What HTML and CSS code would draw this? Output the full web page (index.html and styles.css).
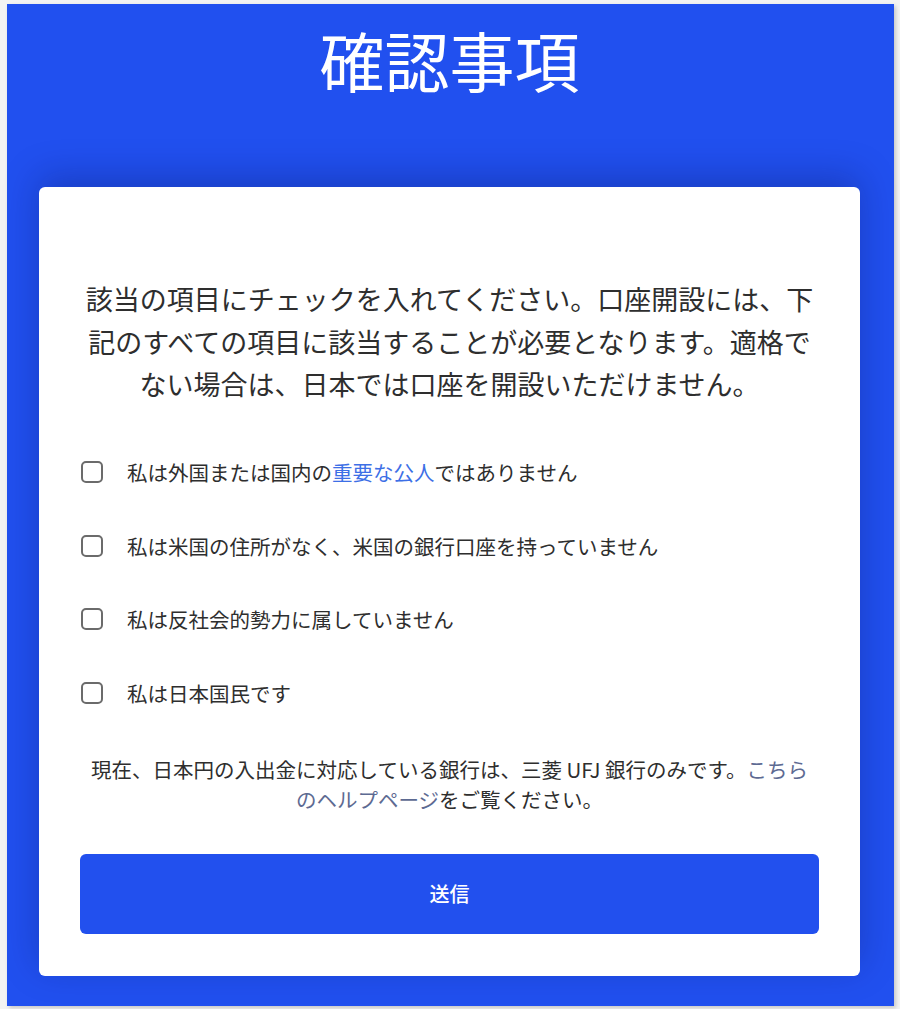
FILE: index.html
```html
<!DOCTYPE html>
<html lang="ja">
<head>
    <meta charset="UTF-8">
    <meta name="viewport" content="width=device-width, initial-scale=1.0">
    <title>確認事項</title>
    <link rel="stylesheet" href="styles.css">
</head>
<body>
    <div class="panel">
        <h1 class="title">確認事項</h1>
        <form class="card">
            <p class="intro">該当の項目にチェックを入れてください。口座開設には、下記のすべての項目に該当することが必要となります。適格でない場合は、日本では口座を開設いただけません。</p>
            <ul class="checks">
                <li class="check">
                    <span class="box"></span>
                    <span class="label">私は外国または国内の<a href="#" class="link">重要な公人</a>ではありません</span>
                </li>
                <li class="check">
                    <span class="box"></span>
                    <span class="label">私は米国の住所がなく、米国の銀行口座を持っていません</span>
                </li>
                <li class="check">
                    <span class="box"></span>
                    <span class="label">私は反社会的勢力に属していません</span>
                </li>
                <li class="check">
                    <span class="box"></span>
                    <span class="label">私は日本国民です</span>
                </li>
            </ul>
            <p class="note">現在、日本円の入出金に対応している銀行は、三菱 UFJ 銀行のみです。<a href="#" class="help">こちら<br>のヘルプページ</a>をご覧ください。</p>
            <button type="button" class="submit">送信</button>
        </form>
    </div>
</body>
</html>
```

FILE: styles.css
```css
body {
    margin: 0;
    background-color: #f3f3f3;
    font-family: "Noto Sans CJK JP", "Noto Sans", sans-serif;
}
.panel {
    margin: 4px 6px 3px 7px;
    height: 1002px;
    box-sizing: border-box;
    padding: 12px 34px 0 32px;
    background-color: #2150ef;
    box-shadow: 2px 2px 4px rgba(0, 0, 0, 0.18);
}
.title {
    margin: 0 0 84px 0;
    text-align: center;
    color: #ffffff;
    font-size: 65px;
    font-weight: 400;
    line-height: 87px;
}
.card {
    display: block;
    height: 789px;
    box-sizing: border-box;
    padding: 91px 41px 0 41px;
    background-color: #ffffff;
    border-radius: 6px;
    box-shadow: 0 -10px 36px rgba(10, 20, 90, 0.3);
}
.intro {
    margin: 0 0 30px 0;
    text-align: center;
    color: #2e2e2e;
    font-size: 27px;
    line-height: 42.5px;
}
.checks {
    list-style: none;
    margin: 0;
    padding: 0;
}
.check {
    display: flex;
    align-items: center;
    height: 73.5px;
}
.box {
    width: 18px;
    height: 18px;
    margin-left: 1px;
    border: 2px solid #6b6b6b;
    border-radius: 5px;
    flex-shrink: 0;
}
.label {
    margin-left: 24px;
    color: #2e2e2e;
    font-size: 20.5px;
}
.link {
    color: #3d6fe6;
    text-decoration: none;
}
.note {
    margin: 24px 0 40px 0;
    text-align: center;
    color: #2e2e2e;
    font-size: 20.5px;
    line-height: 30px;
}
.help {
    color: #5d6a92;
    text-decoration: none;
}
.submit {
    display: block;
    width: 100%;
    height: 80px;
    border: none;
    border-radius: 6px;
    background-color: #2250ee;
    color: #ffffff;
    font-family: inherit;
    font-size: 20px;
    font-weight: 500;
}
```
